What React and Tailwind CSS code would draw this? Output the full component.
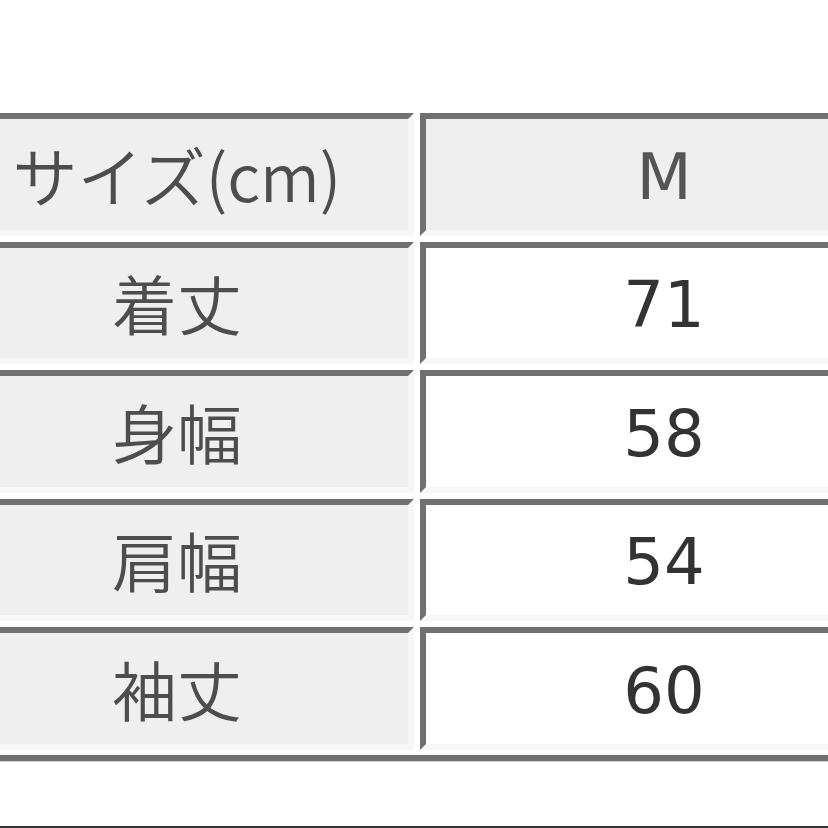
import React from "react";

const rows = [
  ["サイズ(cm)", "M", true],
  ["着丈", "71", false],
  ["身幅", "58", false],
  ["肩幅", "54", false],
  ["袖丈", "60", false],
];

const jp = { fontFamily: '"Noto Sans CJK JP", "Noto Sans", sans-serif', fontWeight: 350 };
const lat = { fontFamily: '"DejaVu Sans", "Noto Sans CJK JP", sans-serif' };

export default function App() {
  return (
    <div className="w-[828px] h-[828px] overflow-hidden bg-white flex flex-col">
      <div className="h-[113px] shrink-0" />
      <div className="ml-[-60px] w-[968px] flex flex-col gap-[6px] shrink-0">
        {rows.map(([label, value, head], i) => (
          <div key={i} className="flex gap-[6px]">
            <div
              className="w-[474px] h-[122.5px] shrink-0 border-[6px] border-t-[#707070] border-l-[#707070] border-r-[#f7f7f7] border-b-[#f7f7f7] bg-[#efefef] flex items-center justify-center text-[65px] leading-none text-[#4d4d4d]"
              style={jp}
            >
              {label}
            </div>
            <div
              className={
                "w-[488px] h-[122.5px] shrink-0 border-[6px] border-t-[#707070] border-l-[#707070] border-r-[#f7f7f7] border-b-[#f7f7f7] flex items-center justify-center pt-[5px] text-[64px] leading-none " +
                (head ? "bg-[#efefef] text-[#555555]" : "bg-white text-[#333333]")
              }
              style={lat}
            >
              {value}
            </div>
          </div>
        ))}
      </div>
      <div className="h-[5.5px] shrink-0" />
      <div className="h-[7px] bg-[#707070] border-b border-[#cfcfcf] shrink-0" />
      <div className="flex-1" />
      <div className="h-[2px] bg-[#333333] shrink-0" />
    </div>
  );
}
